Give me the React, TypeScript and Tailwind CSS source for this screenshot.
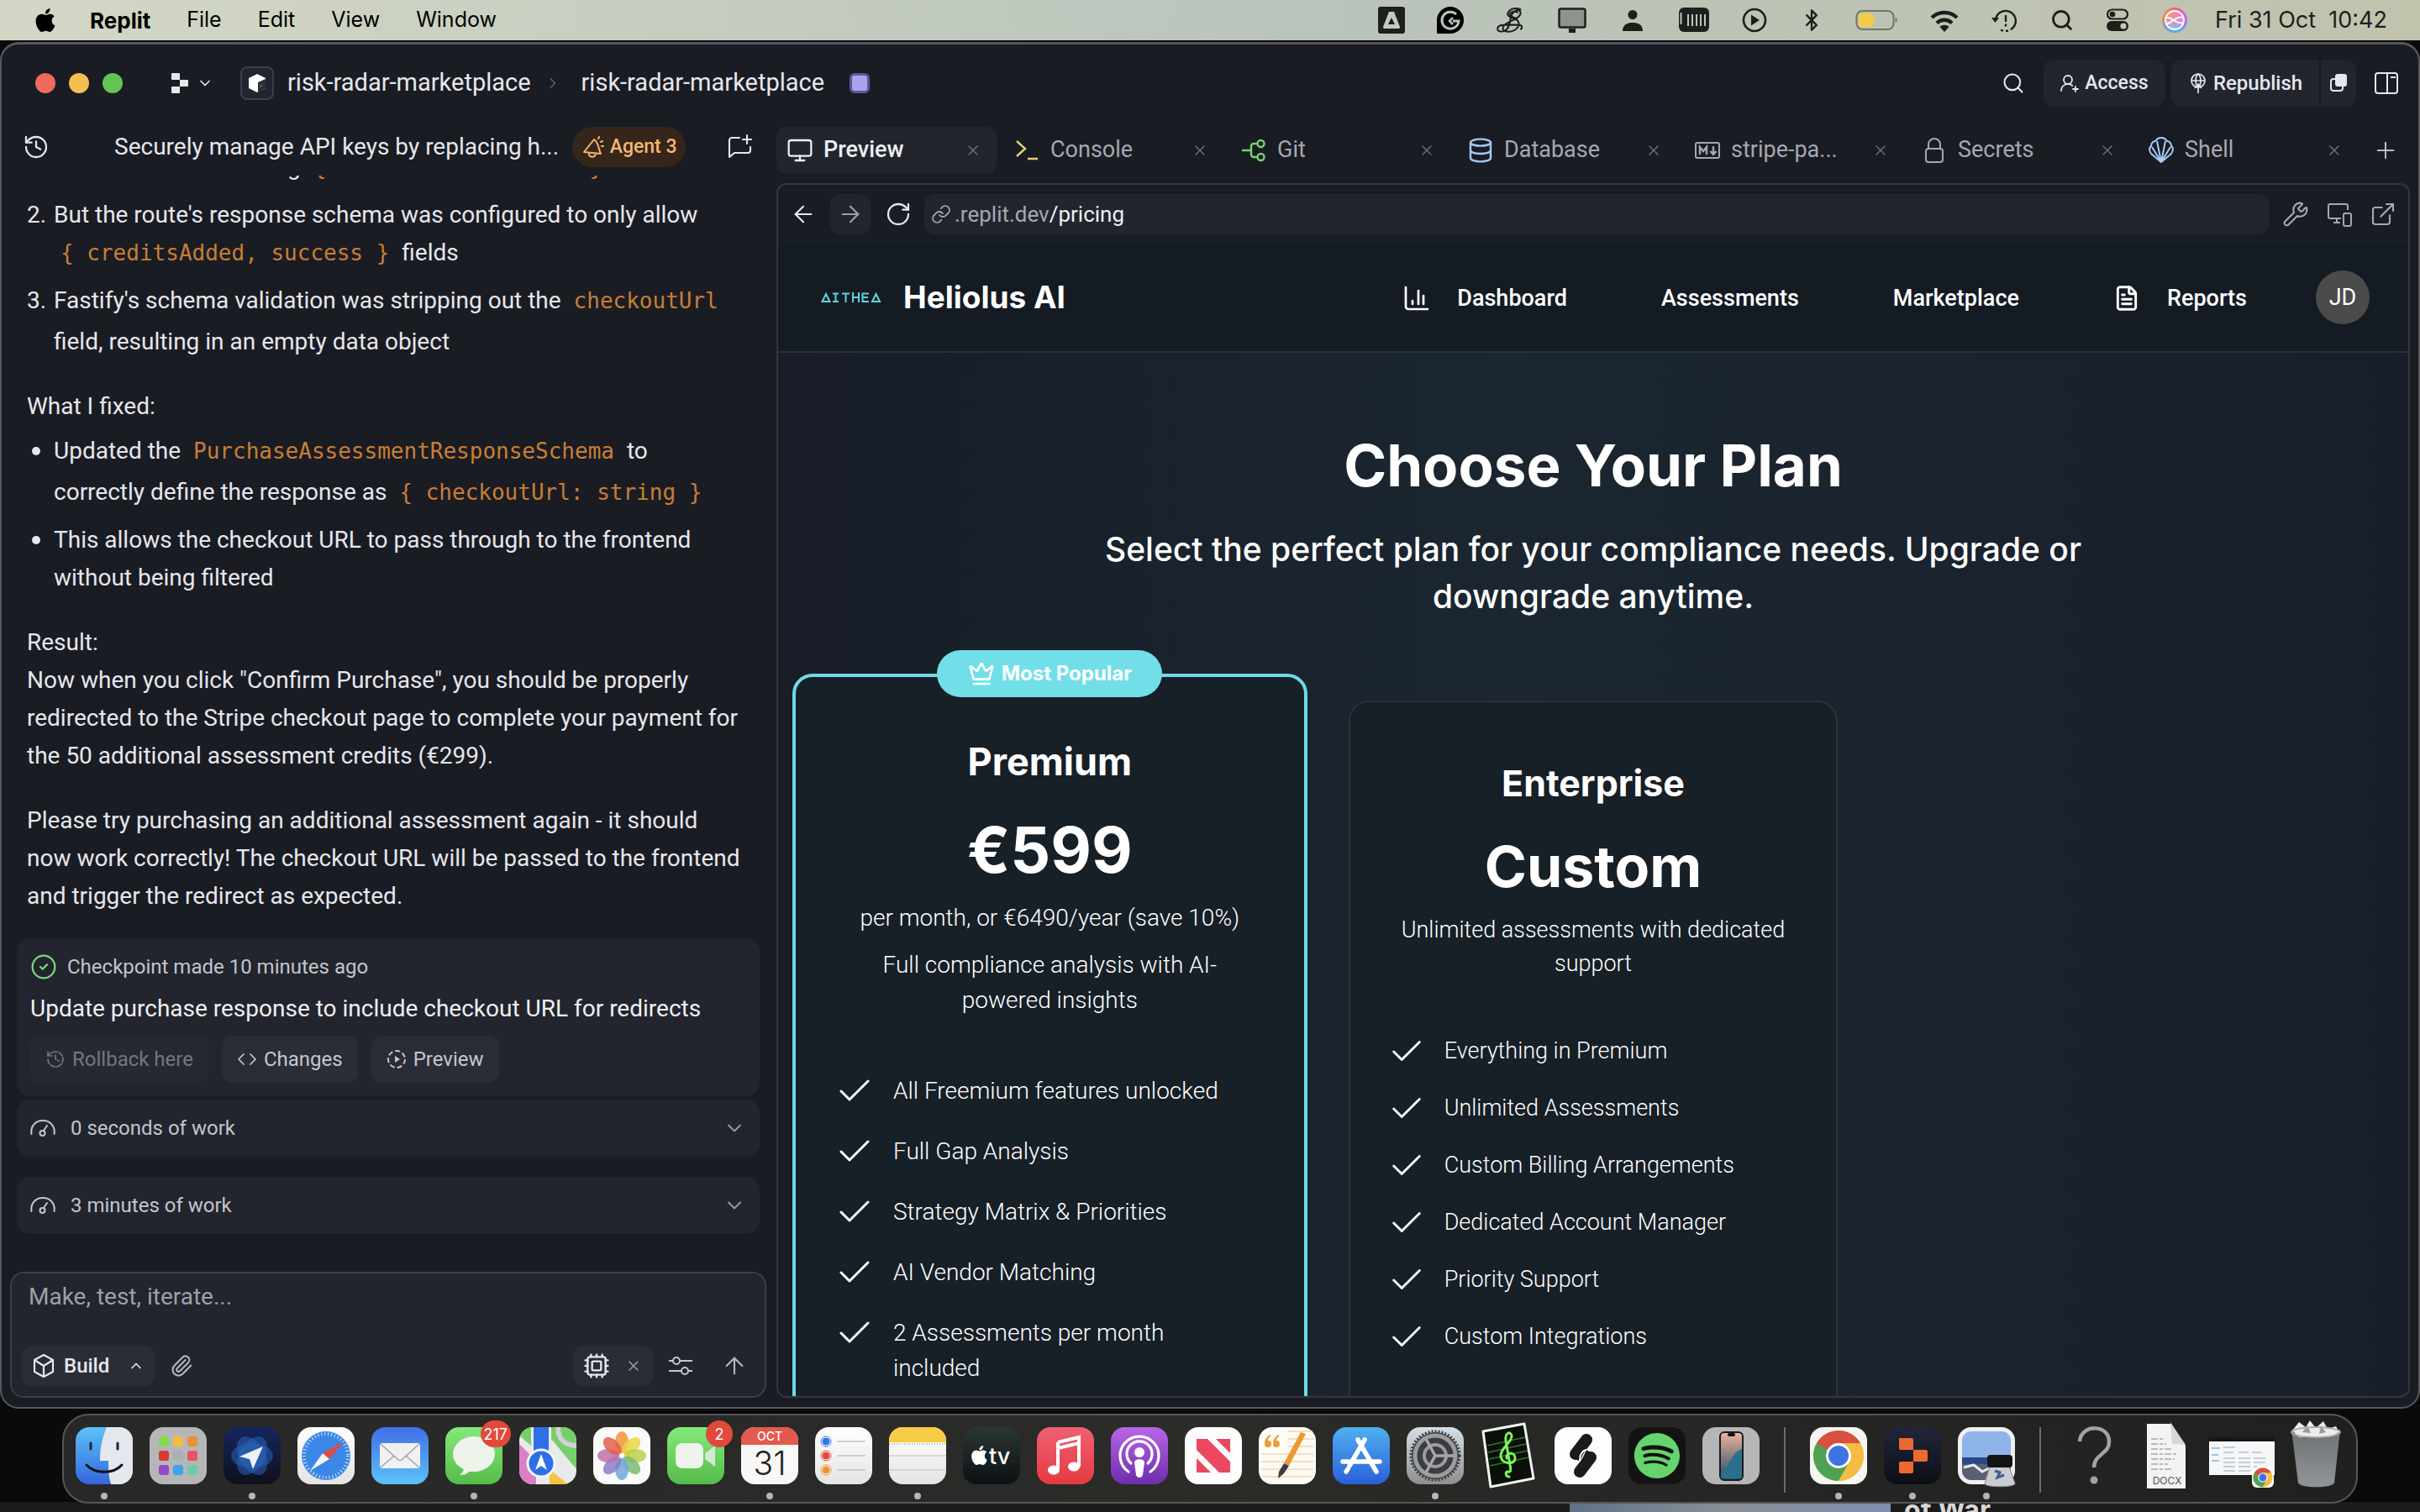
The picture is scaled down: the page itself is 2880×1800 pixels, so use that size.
import React from "react";
import {
  ArrowLeft, ArrowRight, ArrowUp, Bluetooth, Check, ChevronDown, ChevronRight, ChevronUp, CircleCheck,
  Code, Cpu, Crown, Database, ExternalLink, FileText, History, Link, Monitor, Paperclip, Plus, RotateCw,
  Search, UserRoundPlus, Wrench, X,
} from "lucide-react";
import { SiApple, SiSpotify } from "react-icons/si";

type Kids = { children?: React.ReactNode };

/* ---------- macOS menu bar ---------- */

function MenuBar() {
  const menus = ["File", "Edit", "View", "Window"];
  return (
    <header className="flex h-12 shrink-0 items-center justify-between bg-linear-to-r from-[#d4d7c6] via-[#b9c4bb] via-55% to-[#c1c3ad] pr-[39px] pl-10 text-black">
      <nav className="flex items-center gap-[43px] font-[Inter,sans-serif] text-[25px]">
        <SiApple className="size-7" />
        <button className="-ml-1 text-[26px] font-bold">Replit</button>
        {menus.map((m) => (
          <button key={m}>{m}</button>
        ))}
      </nav>
      <div className="flex items-center gap-[38px] text-[#1d1f1c]">
        <svg className="size-8" viewBox="0 0 32 32">
          <rect width="32" height="32" rx="3" fill="currentColor" />
          <path d="M13 6h6l7 18c0 2-1 2-2 2H8c-1 0-2 0-2-2z" fill="#c3cbc0" />
          <path d="M16 13l4 8h-8z" fill="currentColor" />
        </svg>
        <svg className="size-8" viewBox="0 0 32 32">
          <path d="M0 32V16A16 16 0 1 1 16 32z" fill="#000" />
          <path d="M23 9a10 10 0 1 0 3 8h-7" fill="none" stroke="#bcc5bb" strokeWidth="3" />
          <path d="M19 13l-4 4 4 4" fill="none" stroke="#bcc5bb" strokeWidth="2.500" />
        </svg>
        <svg className="size-9" viewBox="0 0 32 32" fill="none" stroke="currentColor" strokeWidth="1.800">
          <path d="M27 5c-5-3-12-1-14 3s4 5 8 7 5 6 1 10-12 4-14 1 3-7 8-9 12-6 10-10-9 0-10 6-2 12-6 14-8 1-8-2 4-4 8-4h14c4 0 5 3 2 5" />
          <path d="M24 8c-4-2-8-1-9 1s4 4 8 6" />
        </svg>
        <svg className="size-[34px]" viewBox="0 0 34 34">
          <rect x="1.500" y="3.500" width="31" height="22" rx="2" fill="#8c948b" stroke="currentColor" strokeWidth="2.500" />
          <path d="M13 27h8v5h-8z" fill="currentColor" />
        </svg>
        <svg className="size-[34px]" viewBox="0 0 34 34" fill="currentColor">
          <circle cx="17" cy="10.500" r="5.500" />
          <path d="M5 30c0-8 6-10 12-10s12 2 12 10z" />
        </svg>
        <svg className="h-[30px] w-9" viewBox="0 0 36 30">
          <rect width="36" height="29" rx="6" fill="currentColor" />
          <path d="M2.500 6v14M11 8v14M16 8v14M21 8v14M26 8v14M31 8v14" stroke="#bcc5bb" strokeWidth="2" />
        </svg>
        <svg className="size-8" viewBox="0 0 32 32">
          <circle cx="16" cy="16" r="13" fill="none" stroke="currentColor" strokeWidth="2.600" />
          <path d="M12 9.500l10 6.500-10 6.500z" fill="currentColor" />
        </svg>
        <Bluetooth className="size-7" />
        <svg className="h-7 w-[50px]" viewBox="0 0 50 28">
          <rect x="1.500" y="3" width="44" height="22" rx="7" fill="none" stroke="#6f776c" strokeWidth="2" />
          <rect x="4" y="6" width="18" height="16" rx="4" fill="#f5cb45" />
          <path d="M47.500 11c3 1 3 5 0 6z" fill="#6f776c" />
        </svg>
        <svg className="size-9" viewBox="0 0 36 36" fill="none" stroke="currentColor" strokeWidth="4.500">
          <path d="M3 15c8-8 22-8 30 0M9 21.500c5-5 13-5 18 0" />
          <path d="M12.500 26c3-3 8-3 11 0L18 32z" fill="currentColor" stroke="none" />
        </svg>
        <svg className="size-8" viewBox="0 0 32 32" fill="none" stroke="currentColor" strokeWidth="2.400">
          <path d="M5 15A12 12 0 1 1 9 26" strokeDasharray="48 3 3 3 3 3" />
          <path d="M0 13h9l-4.500 6z" fill="currentColor" stroke="none" />
          <path d="M17 10v8M17 20.500v3" />
        </svg>
        <Search className="size-7" strokeWidth={2.4} />
        <svg className="size-7" viewBox="0 0 28 28">
          <rect x="2" y="1.500" width="24" height="11" rx="5.500" fill="none" stroke="currentColor" strokeWidth="2.200" />
          <circle cx="8" cy="7" r="3.300" fill="currentColor" />
          <rect x="1" y="15" width="26" height="12" rx="6" fill="currentColor" />
          <circle cx="21" cy="21" r="3.600" fill="#bfc6b8" />
        </svg>
        <svg className="size-8" viewBox="0 0 32 32">
          <defs>
            <linearGradient id="siri" x1="0" y1="0" x2="1" y2=".3">
              <stop offset="0" stopColor="#f09a4a" />
              <stop offset=".6" stopColor="#ee5a86" />
              <stop offset="1" stopColor="#d65af0" />
            </linearGradient>
            <linearGradient id="siriLow" x1="0" y1="0" x2="0" y2="1">
              <stop offset=".4" stopColor="#4ab4f5" stopOpacity="0" />
              <stop offset=".95" stopColor="#4ab4f5" />
            </linearGradient>
          </defs>
          <circle cx="16" cy="16" r="15" fill="url(#siri)" />
          <circle cx="16" cy="16" r="15" fill="url(#siriLow)" />
          <circle cx="16" cy="16" r="11" fill="#ffffff" fillOpacity=".25" stroke="#fff" strokeWidth="1.800" />
          <path d="M6 13c6-2 12 9 20 6M6 20c6 1 11-10 20-7" fill="none" stroke="#fff" strokeWidth="1.800" />
        </svg>
        <time className="-ml-1.5 font-[Inter,sans-serif] text-[27px] whitespace-pre">Fri 31 Oct  10:42</time>
      </div>
    </header>
  );
}

/* ---------- Replit window ---------- */

function ReplitMark({ className }: { className: string }) {
  return (
    <svg className={className} viewBox="0 0 20 24" fill="currentColor">
      <path d="M1 0h8a1 1 0 0 1 1 1v7H1a1 1 0 0 1-1-1V1a1 1 0 0 1 1-1zM10 8h9a1 1 0 0 1 1 1v6a1 1 0 0 1-1 1h-9zM1 16h9v7a1 1 0 0 1-1 1H1a1 1 0 0 1-1-1v-6a1 1 0 0 1 1-1z" />
    </svg>
  );
}

function TitleBar() {
  return (
    <div className="flex h-[92px] shrink-0 items-center pr-5 pl-10">
      <div className="flex gap-4">
        <button aria-label="Close" className="size-6 rounded-full bg-[#ec6a5e]" />
        <button aria-label="Minimise" className="size-6 rounded-full bg-[#f4bf4f]" />
        <button aria-label="Zoom" className="size-6 rounded-full bg-[#61c554]" />
      </div>
      <button aria-label="Replit menu" className="ml-[58px] flex items-center gap-2.5">
        <ReplitMark className="h-6 w-5" />
        <ChevronDown className="size-5" />
      </button>
      <button aria-label="Workspace" className="ml-8 flex size-10 items-center justify-center rounded-lg border-2 border-[#3b3e47] bg-[#22252e]">
        <svg className="size-6" viewBox="0 0 24 24">
          <path d="M12 1l10 5v12l-10 5-10-5V6z" fill="#fff" />
          <path d="M13 11l9-4v11l-9 5z" fill="#2b2f33" />
          <path d="M15 17l3-3" stroke="#6fae7a" />
        </svg>
      </button>
      <a href="#workspace" className="ml-4 text-[29px]">risk-radar-marketplace</a>
      <ChevronRight className="mx-4 size-5 text-[#5c5f68]" />
      <a href="#app" className="ml-2 text-[29px]">risk-radar-marketplace</a>
      <span className="ml-[30px] flex size-6 items-center justify-center rounded-md border-3 border-[#5d5796] bg-[#a9a4f0]" />
      <div className="ml-auto flex items-center gap-2">
        <button aria-label="Search" className="mr-2 p-1.5"><Search className="size-7" strokeWidth={1.8} /></button>
        <button className="flex h-14 w-36 items-center justify-center gap-1.5 rounded-xl bg-[#22252e] text-[23px] font-medium">
          <UserRoundPlus className="size-6" strokeWidth={1.8} />Access
        </button>
        <div className="flex h-14 rounded-xl bg-[#22252e]">
          <button className="flex w-44 items-center justify-center gap-1.5 text-[24px] font-medium">
            <svg className="size-6" viewBox="0 0 24 24" fill="none" stroke="currentColor" strokeWidth="1.700">
              <circle cx="12" cy="9" r="8" />
              <path d="M4 9h16M12 1c-4 3-4 13 0 16M12 1c4 3 4 13 0 16M12 12v12M8 18l4-4 4 4" />
            </svg>
            Republish
          </button>
          <button aria-label="Deployment" className="flex w-11 items-center justify-center border-l-2 border-[#1a1c24]">
            <svg className="size-6" viewBox="0 0 24 24" fill="none" stroke="currentColor" strokeWidth="2">
              <rect x="3" y="7" width="14" height="14" rx="3" />
              <rect x="9" y="2" width="12" height="13" rx="2" fill="currentColor" />
            </svg>
          </button>
        </div>
        <button aria-label="Toggle panel" className="ml-2.5 p-1">
          <svg className="h-7 w-7" viewBox="0 0 28 28" fill="none" stroke="currentColor" strokeWidth="2">
            <rect x="1" y="2" width="26" height="24" rx="3" />
            <path d="M15 2v24M19 7h6" />
          </svg>
        </button>
      </div>
    </div>
  );
}

function Mono({ children }: Kids) {
  return (
    <code className="inline-block px-2 pb-[3px] font-['DejaVu_Sans_Mono',monospace] text-[26px] whitespace-nowrap text-[#c97e33]">
      {children}
    </code>
  );
}

function Item({ mark, children }: Kids & { mark: string }) {
  return (
    <li className="flex">
      <span className="w-8 shrink-0">{mark}</span>
      <div>{children}</div>
    </li>
  );
}

function Bullet({ children }: Kids) {
  return (
    <li className="flex">
      <span className="flex h-[45px] w-8 shrink-0 items-center pl-1.5">
        <i className="size-2.5 rounded-full bg-current" />
      </span>
      <div>{children}</div>
    </li>
  );
}

function CardButton({ icon, children, dim }: Kids & { icon: React.ReactNode; dim?: boolean }) {
  return (
    <button
      disabled={dim}
      className={`flex h-14 items-center gap-2 rounded-xl px-[18px] text-[24px] ${dim ? "bg-[#262932] text-[#737680]" : "bg-[#2a2d36] text-[#c5c8ce]"}`}
    >
      {icon}
      {children}
    </button>
  );
}

function WorkRow({ children }: Kids) {
  return (
    <button className="flex h-[68px] w-full items-center gap-[18px] rounded-2xl bg-[#22252e] px-4 text-[24px] text-[#c2c5cc]">
      <svg className="size-[30px]" viewBox="0 0 30 30" fill="none" stroke="currentColor" strokeWidth="2" strokeLinecap="round">
        <path d="M1.500 22C0 13 6 6 15 6s15 7 13.500 16" />
        <circle cx="14.500" cy="21" r="3" />
        <path d="M16 18l4-6" />
      </svg>
      {children}
      <ChevronDown className="ml-auto size-7 text-[#9a9da6]" strokeWidth={1.6} />
    </button>
  );
}

function ChatPanel() {
  return (
    <section className="flex w-[922px] shrink-0 flex-col">
      <div className="flex h-[60px] shrink-0 items-center pr-6 pl-[21px]">
        <button aria-label="History" className="p-1"><History className="size-8" strokeWidth={1.7} /></button>
        <h2 className="ml-[73px] truncate text-[28px]">Securely manage API keys by replacing h...</h2>
        <span className="ml-4 flex h-12 w-[135px] shrink-0 items-center justify-center gap-1.5 rounded-full bg-[#35251a] text-[23px] font-medium text-[#f3b673]">
          <svg className="size-7" viewBox="0 0 28 28" fill="none" stroke="currentColor" strokeWidth="2" strokeLinecap="round" strokeLinejoin="round">
            <path d="M15 5L3 20l20 2C20 17 21 9 15 5zM9 22c0 5 7 5 8 0M20 4l1-2M23 8l2-1M24 13h2" />
          </svg>
          Agent 3
        </span>
        <button aria-label="New chat" className="ml-auto p-1">
          <svg className="size-8" viewBox="0 0 32 32" fill="none" stroke="currentColor" strokeWidth="2.100" strokeLinecap="round" strokeLinejoin="round">
            <path d="M16 5H7a3 3 0 0 0-3 3v20l6-5h16a3 3 0 0 0 3-3v-4M25 2v10M20 7h10" />
          </svg>
        </button>
      </div>

      <div className="mt-1 flex min-h-0 flex-1 flex-col justify-end overflow-hidden pb-[45px]">
        <div className="shrink-0 px-[30px] pb-7 text-[28px] leading-[45px]">
          <ol className="flex flex-col gap-2">
            <Item mark="">The server was sending <Mono>{"{ checkoutUrl: '...' }"}</Mono></Item>
            <Item mark="2.">
              But the route's response schema was configured to only allow<br />
              <Mono>{"{ creditsAdded, success }"}</Mono> fields
            </Item>
            <Item mark="3.">
              Fastify's schema validation was stripping out the <Mono>checkoutUrl</Mono><br />
              field, resulting in an empty data object
            </Item>
          </ol>
          <p className="mt-8">What I fixed:</p>
          <ul className="mt-2 flex flex-col gap-2">
            <Bullet>
              Updated the <Mono>PurchaseAssessmentResponseSchema</Mono> to<br />
              correctly define the response as <Mono>{"{ checkoutUrl: string }"}</Mono>
            </Bullet>
            <Bullet>This allows the checkout URL to pass through to the frontend<br />without being filtered</Bullet>
          </ul>
          <p className="mt-8">
            Result:<br />
            Now when you click "Confirm Purchase", you should be properly<br />
            redirected to the Stripe checkout page to complete your payment for<br />
            the 50 additional assessment credits (€299).
          </p>
          <p className="mt-8">
            Please try purchasing an additional assessment again - it should<br />
            now work correctly! The checkout URL will be passed to the frontend<br />
            and trigger the redirect as expected.
          </p>
        </div>

        <div className="shrink-0 pr-5 pl-[18px]">
          <article className="rounded-2xl bg-[#22252e] p-4">
            <p className="flex h-9 items-center gap-3 text-[24px] text-[#c2c5cc]">
              <CircleCheck className="size-8 text-[#7ed37f]" strokeWidth={1.7} />
              Checkpoint made 10 minutes ago
            </p>
            <p className="my-2 text-[28px] leading-[48px] text-[#eeeff2]">Update purchase response to include checkout URL for redirects</p>
            <div className="flex gap-4">
              <CardButton dim icon={<History className="size-6" strokeDasharray="6 2" strokeWidth={1.7} />}>Rollback here</CardButton>
              <CardButton icon={<Code className="size-6" strokeWidth={1.7} />}>Changes</CardButton>
              <CardButton
                icon={
                  <svg className="size-6" viewBox="0 0 24 24" fill="none" stroke="currentColor" strokeWidth="2">
                    <circle cx="12" cy="12" r="10" strokeDasharray="6 3" />
                    <path d="M10 8l6 4-6 4z" fill="currentColor" stroke="none" />
                  </svg>
                }
              >
                Preview
              </CardButton>
            </div>
          </article>
          <div className="mt-1 flex flex-col gap-6">
            <WorkRow>0 seconds of work</WorkRow>
            <WorkRow>3 minutes of work</WorkRow>
          </div>
        </div>
      </div>

      <form className="mr-3 mb-[11px] ml-2.5 shrink-0 rounded-2xl border-2 border-[#3b3e47] bg-[#22252e]">
        <label className="block px-5 pt-2.5">
          <span className="sr-only">Message</span>
          <textarea rows={1} placeholder="Make, test, iterate..." className="block h-[76px] w-full resize-none bg-transparent text-[28px] leading-9 outline-none placeholder:text-[#9da0a9]" />
        </label>
        <div className="mb-3 flex h-12 items-center pr-5 pl-3">
          <button type="button" className="flex h-12 items-center gap-2.5 rounded-xl bg-[#2a2d36] px-3 text-[24px] font-medium">
            <svg className="size-7" viewBox="0 0 28 28" fill="none" stroke="currentColor" strokeWidth="2.200" strokeLinejoin="round">
              <path d="M14 1l11 6v14l-11 6-11-6V7zM3 7l11 7 11-7M14 14v13" />
            </svg>
            Build
            <ChevronUp className="ml-3 size-5" />
          </button>
          <button type="button" aria-label="Attach" className="ml-3.5 p-1 text-[#b4b7be]"><Paperclip className="size-7" strokeWidth={1.8} /></button>
          <div className="ml-auto flex h-12 w-24 items-center justify-between rounded-xl bg-[#2a2d36] pr-3.5 pl-3">
            <Cpu className="size-8" strokeWidth={1.8} />
            <button type="button" aria-label="Remove" className="text-[#9a9da6]"><X className="size-5" strokeWidth={1.8} /></button>
          </div>
          <button type="button" aria-label="Options" className="ml-4 text-[#c5c8ce]">
            <svg className="size-8" viewBox="0 0 32 32" fill="none" stroke="currentColor" strokeWidth="2">
              <path d="M2 10h5M15 10h15M2 22h15M25 22h5" />
              <circle cx="11" cy="10" r="4" />
              <circle cx="21" cy="22" r="4" />
            </svg>
          </button>
          <button type="submit" aria-label="Send" className="ml-8 text-[#b4b7be]"><ArrowUp className="size-8" strokeWidth={1.6} /></button>
        </div>
      </form>
    </section>
  );
}

const S = "size-8 shrink-0";
const tabs: { label: string; icon: React.ReactNode; active?: boolean }[] = [
  { label: "Preview", active: true, icon: <Monitor className={S} strokeWidth={1.7} /> },
  {
    label: "Console",
    icon: (
      <svg className={`${S} text-[#e2cf6d]`} viewBox="0 0 32 32" fill="none" stroke="currentColor" strokeWidth="2.400">
        <path d="M4 5l10 9-10 9M17 26h12" />
      </svg>
    ),
  },
  {
    label: "Git",
    icon: (
      <svg className={`${S} text-[#76d275]`} viewBox="0 0 32 32" fill="none" stroke="currentColor" strokeWidth="2.400">
        <path d="M2 16h11M20 8h-4a3 3 0 0 0-3 3v10a3 3 0 0 0 3 3h4" />
        <circle cx="24.500" cy="8" r="4" />
        <circle cx="24.500" cy="24" r="4" />
      </svg>
    ),
  },
  { label: "Database", icon: <Database className={`${S} text-[#a5cbf7]`} strokeWidth={1.8} /> },
  {
    label: "stripe-pa...",
    icon: (
      <svg className={S} viewBox="0 0 32 32" fill="none" stroke="currentColor" strokeWidth="2">
        <rect x="2" y="7" width="28" height="18" rx="2" />
        <path d="M7 21v-9l4 5 4-5v9M23 11v9M19.500 17l3.500 4 3.500-4" strokeWidth="2.400" />
      </svg>
    ),
  },
  {
    label: "Secrets",
    icon: (
      <svg className={S} viewBox="0 0 32 32" fill="none" stroke="currentColor" strokeWidth="2">
        <rect x="6" y="14" width="20" height="16" rx="3" />
        <path d="M9 14V9a7 7 0 0 1 14 0v5" />
      </svg>
    ),
  },
  {
    label: "Shell",
    icon: (
      <svg className={`${S} text-[#a5cbf7]`} viewBox="0 0 32 32" fill="none" stroke="currentColor" strokeWidth="2" strokeLinejoin="round">
        <path d="M16 30L4 20C1 16 2 12 4 11c0-4 3-6 5-6 2-3 5-4 7-4s5 1 7 4c2 0 5 2 5 6 2 1 3 5 0 9z" />
        <path d="M16 30L5 12M16 30L11 5M16 30l5-25M16 30l11-18" />
      </svg>
    ),
  },
];

function Tabs() {
  return (
    <div className="flex h-[63px] shrink-0 items-center gap-2 pt-1" role="tablist">
      {tabs.map((t) => (
        <div key={t.label} className={`flex h-14 min-w-0 flex-1 items-center rounded-xl pr-[18px] pl-3 text-[27px] ${t.active ? "bg-[#22252e] text-[#eeeff2]" : "text-[#a5a8b0]"}`}>
          <button role="tab" aria-selected={!!t.active} className="flex min-w-0 flex-1 items-center gap-3">
            {t.icon}
            <span className={`truncate ${t.active ? "font-medium" : ""}`}>{t.label}</span>
          </button>
          <button aria-label={`Close ${t.label}`} className="text-[#6e717a]"><X className="size-5" strokeWidth={1.6} /></button>
        </div>
      ))}
      <button aria-label="New tab" className="mr-1 flex h-11 w-[50px] shrink-0 items-center justify-center text-[#b9bcc3]"><Plus className="size-8" strokeWidth={1.5} /></button>
    </div>
  );
}

function UrlBar() {
  return (
    <div className="flex h-[70px] shrink-0 items-center bg-[#1a1c24] px-3">
      <button aria-label="Back" className="flex w-9 justify-center"><ArrowLeft className="size-8" strokeWidth={1.6} /></button>
      <button aria-label="Forward" className="ml-3.5 flex size-12 items-center justify-center rounded-xl bg-[#22252e] text-[#9da0a9]"><ArrowRight className="size-8" strokeWidth={1.6} /></button>
      <button aria-label="Reload" className="ml-[15px] flex w-9 justify-center"><RotateCw className="size-8" strokeWidth={1.7} /></button>
      <label className="ml-[13px] flex h-12 min-w-0 flex-1 items-center rounded-xl bg-[#22252e] pl-2 text-[26px] text-[#a5a8b0]">
        <Link className="mr-1 size-6" strokeWidth={1.8} />
        <span>.replit.dev</span>
        <input aria-label="Path" defaultValue="/pricing" className="min-w-0 flex-1 bg-transparent text-[#eeeff2] outline-none" />
      </label>
      <div className="mr-0.5 ml-4 flex items-center gap-5 text-[#a5a8b0]">
        <button aria-label="Tools"><Wrench className="size-8" strokeWidth={1.6} /></button>
        <button aria-label="Devices">
          <svg className="size-8" viewBox="0 0 32 32" fill="none" stroke="currentColor" strokeWidth="2">
            <path d="M26 11V6a2 2 0 0 0-2-2H5a2 2 0 0 0-2 2v13a2 2 0 0 0 2 2h13M13 21v5M9 26h8" />
            <rect x="21" y="15" width="9" height="15" rx="2" />
          </svg>
        </button>
        <button aria-label="Open in new tab"><ExternalLink className="size-8" strokeWidth={1.6} /></button>
      </div>
    </div>
  );
}

function AppNav() {
  return (
    <nav className="flex h-[130px] shrink-0 items-center border-b-2 border-[#29323b] bg-[#141b23] pr-[46px] pl-[51px] text-[27px] font-medium text-white">
      <svg className="h-3 w-[72px]" viewBox="0 0 72 12" fill="none" stroke="#5fd3da" strokeWidth="2">
        <path d="M1.500 11L6 2l4.500 9zM14 1.500h7M17.500 1.500v9.500M14 11h7M25 1.500h9M29.500 1.500V12M38 0v12M45 0v12M38 6h7M57 1.500h-7.500V11H57M49.500 6H56M61 11l4.500-9 4.500 9z" />
      </svg>
      <span className="ml-[26px] font-[Inter,sans-serif] text-[37px] font-bold">Heliolus AI</span>
      <div className="ml-auto flex items-center gap-28 pt-0.5">
        <a href="#dashboard" className="flex items-center gap-8">
          <svg className="size-8" viewBox="0 0 32 32" fill="none" stroke="currentColor" strokeWidth="2.700" strokeLinecap="round" strokeLinejoin="round">
            <path d="M3 3v23a3 3 0 0 0 3 3h23M11 23v-4M18 23V7M24 23V13" />
          </svg>
          Dashboard
        </a>
        <a href="#assessments">Assessments</a>
        <a href="#marketplace">Marketplace</a>
        <a href="#reports" className="flex items-center gap-8"><FileText className="size-8" strokeWidth={2.2} />Reports</a>
      </div>
      <button className="ml-[82px] size-16 rounded-full bg-[#4b4b4b] text-[27px] font-normal">JD</button>
    </nav>
  );
}

function Feature({ children, tall }: Kids & { tall?: boolean }) {
  return (
    <li className={`flex ${tall ? "gap-[22px] text-[28px] leading-[42px]" : "gap-[22px] text-[27px] leading-10"}`}>
      <span className="flex h-[42px] shrink-0 items-center"><Check className={`shrink-0 ${tall ? "size-12" : "size-[46px]"}`} strokeWidth={1.5} /></span>
      <span>{children}</span>
    </li>
  );
}

function Pricing() {
  return (
    <main className="min-h-0 flex-1 overflow-hidden bg-linear-to-r from-[#181d27] via-[#1b2631] via-45% to-[#191f2a] px-8 text-white">
      <div className="pt-[88px] text-center font-[Inter,sans-serif]">
        <h1 className="text-[69px] leading-[92px] font-bold">Choose Your Plan</h1>
        <p className="mt-[26px] text-[39px] leading-[56px] font-medium">
          Select the perfect plan for your compliance needs. Upgrade or<br />downgrade anytime.
        </p>
      </div>
      <div className="mt-[96px] grid grid-cols-3 gap-16">
        <section className="relative -mx-[15px] -mt-8 h-[1100px] rounded-3xl border-4 border-[#6fdbe3] bg-[#171f27] px-[46px]">
          <div className="absolute inset-x-0 -top-8 flex justify-center">
            <span className="flex h-14 w-[268px] items-center justify-center gap-2 rounded-full bg-[#72dfe8] font-[Inter,sans-serif] text-[24px] font-bold">
              <Crown className="size-8" />Most Popular
            </span>
          </div>
          <div className="pt-[66px] text-center">
            <h2 className="font-[Inter,sans-serif] text-[45px] leading-[70px] font-bold">Premium</h2>
            <p className="mt-5 font-[Inter,sans-serif] text-[75px] leading-[100px] font-bold">€599</p>
            <p className="mt-2 text-[28px] leading-[46px] font-light">per month, or €6490/year (save 10%)</p>
            <p className="mt-3 text-[28px] leading-[42px] font-light">Full compliance analysis with AI-<br />powered insights</p>
          </div>
          <ul className="mt-[66px] flex flex-col gap-[30px] font-light">
            <Feature tall>All Freemium features unlocked</Feature>
            <Feature tall>Full Gap Analysis</Feature>
            <Feature tall>Strategy Matrix &amp; Priorities</Feature>
            <Feature tall>AI Vendor Matching</Feature>
            <Feature tall>2 Assessments per month<br />included</Feature>
          </ul>
        </section>
        <section className="h-[1060px] rounded-3xl border-2 border-[#28323b] bg-[#171f27] px-11">
          <div className="pt-[62px] text-center">
            <h2 className="font-[Inter,sans-serif] text-[43px] leading-[68px] font-bold">Enterprise</h2>
            <p className="mt-[17px] font-[Inter,sans-serif] text-[68px] leading-[96px] font-bold">Custom</p>
            <p className="mt-2 text-[27px] leading-10 font-light">Unlimited assessments with dedicated<br />support</p>
          </div>
          <ul className="mt-16 flex flex-col gap-[26px] font-light">
            <Feature>Everything in Premium</Feature>
            <Feature>Unlimited Assessments</Feature>
            <Feature>Custom Billing Arrangements</Feature>
            <Feature>Dedicated Account Manager</Feature>
            <Feature>Priority Support</Feature>
            <Feature>Custom Integrations</Feature>
          </ul>
        </section>
      </div>
    </main>
  );
}

function ReplitWindow() {
  return (
    <div className="flex min-h-0 flex-1 flex-col overflow-hidden rounded-[22px] border-2 border-t-3 border-[#55585d] bg-[#1a1c24] text-[#e6e7eb]">
      <TitleBar />
      <div className="flex min-h-0 flex-1">
        <ChatPanel />
        <div className="flex min-w-0 flex-1 flex-col pr-2.5">
          <Tabs />
          <div className="mt-2.5 mb-[11px] flex min-h-0 flex-1 flex-col overflow-hidden rounded-xl border-2 border-[#33363f]">
            <UrlBar />
            <AppNav />
            <Pricing />
          </div>
        </div>
      </div>
    </div>
  );
}

/* ---------- Dock ---------- */

function Tile({ children, bg, dot, badge, label }: Kids & { bg?: string; dot?: boolean; badge?: string; label: string }) {
  return (
    <button aria-label={label} className="relative size-[68px] shrink-0">
      <svg className="size-[68px] overflow-visible" viewBox="0 0 68 68">
        {bg && <rect width="68" height="68" rx="16" fill={bg} />}
        {children}
      </svg>
      {badge && (
        <span className="absolute -top-2 -right-2.5 flex h-8 min-w-8 items-center justify-center rounded-full bg-[#e2493b] px-1 font-[Inter,sans-serif] text-[18px] text-white">
          {badge}
        </span>
      )}
      {dot && <i className="absolute -bottom-[18px] left-[30px] size-2 rounded-full bg-[#b5b5b5]" />}
    </button>
  );
}

function Grad({ id, a, b }: { id: string; a: string; b: string }) {
  return (
    <linearGradient id={id} x1="0" y1="0" x2="0" y2="1">
      <stop offset="0" stopColor={a} />
      <stop offset="1" stopColor={b} />
    </linearGradient>
  );
}

function ChromeMark() {
  return (
    <g>
      <circle cx="34" cy="34" r="30" fill="#f3bc42" />
      <path d="M8 19A30 30 0 0 0 34 64l13-22.500L34 34z" fill="#4fa153" />
      <path d="M60 19a30 30 0 0 1-26 45l13-22.500V19z" fill="#f3bc42" />
      <path d="M8 19a30 30 0 0 1 52 0H34L21 41z" fill="#d8503f" />
      <path d="M8 19l13 22.500L34 34z" fill="#4fa153" />
      <circle cx="34" cy="34" r="15" fill="#fff" />
      <circle cx="34" cy="34" r="12" fill="#3f74e0" />
    </g>
  );
}

const launchColors = ["#7fdc4f", "#f4bd3f", "#ec8f35", "#d83a2f", "#a9b1b5", "#ee5064", "#9746cf", "#3fa0f2", "#68cda6"];
const petals = ["#f0953a", "#ecd63f", "#bccf4c", "#7cba70", "#6ea8dc", "#8c7bc9", "#c070a8", "#e2604c"];

function Dock() {
  return (
    <footer className="relative flex h-[123px] shrink-0 justify-center overflow-hidden pt-1.5">
      <div className="absolute inset-x-0 bottom-0 flex h-3 items-start bg-[#1b1b1b]">
        <span className="ml-[1868px] h-3 w-[382px] bg-linear-to-r from-[#5f7286] via-[#8a8f96] to-[#7e8eb0]" />
        <span className="ml-4 -mt-2 font-[Inter,sans-serif] text-[32px] leading-9 font-bold whitespace-nowrap text-[#d8d8d8]">of War</span>
      </div>
      <svg className="absolute size-0">
        <defs>
          <Grad id="finder" a="#5cc2f7" b="#3566dd" />
          <Grad id="comet" a="#14265f" b="#10101c" />
          <Grad id="sky" a="#3f6fe8" b="#5cc2f7" />
          <Grad id="green" a="#83ea7a" b="#56bb48" />
          <Grad id="white" a="#ffffff" b="#e4e4e2" />
          <Grad id="tv" a="#2b3634" b="#0c1114" />
          <Grad id="music" a="#ee6173" b="#e53a41" />
          <Grad id="pod" a="#b766e6" b="#6e2cab" />
          <Grad id="store" a="#4fb0f0" b="#2960d9" />
          <Grad id="set" a="#d3dfe6" b="#8f8f8d" />
          <Grad id="replit" a="#20263b" b="#0d0f16" />
          <Grad id="phone" a="#f0b49a" b="#1f4a68" />
          <Grad id="can" a="#6e7274" b="#909496" />
          <clipPath id="tile"><rect width="68" height="68" rx="16" /></clipPath>
        </defs>
      </svg>
      <div className="relative flex h-[107px] items-start gap-5 rounded-[32px] border-2 border-[#56565a] bg-linear-to-r from-[#282828] via-[#2b2b28] to-[#20201f] px-3.5 pt-3.5">
        <Tile label="Finder" dot>
          <g clipPath="url(#tile)">
            <rect width="68" height="68" fill="url(#finder)" />
            <path d="M37 0c-6 14-8 26-8 40h10c0 10 0 18 3 28h26V0z" fill="#e3e7ee" />
          </g>
          <path d="M18 19v7M50 19v7" stroke="#1b2a3a" strokeWidth="3" strokeLinecap="round" />
          <path d="M13 45c10 11 32 11 42 0" stroke="#111" strokeWidth="3" fill="none" strokeLinecap="round" />
        </Tile>
        <Tile label="Launchpad" bg="#b5b6b8">
          {launchColors.map((c, i) => (
            <rect key={c} x={11 + (i % 3) * 17} y={11 + Math.floor(i / 3) * 17} width="12" height="12" rx="3" fill={c} />
          ))}
        </Tile>
        <Tile label="Comet" bg="url(#comet)" dot>
          {[0, 60, 120].map((a) => (
            <ellipse key={a} cx="34" cy="34" rx="25" ry="15" fill="#2a63b8" opacity=".55" transform={`rotate(${a} 34 34)`} />
          ))}
          <path d="M47 23L19 35l12 3 4 12z" fill="#eef1f8" />
        </Tile>
        <Tile label="Safari" bg="url(#white)">
          <circle cx="34" cy="34" r="29" fill="#3b86e6" />
          <circle cx="34" cy="34" r="26" fill="none" stroke="#d9ecff" strokeWidth="4" strokeDasharray="1 3" />
          <path d="M55 17L38 38l-8-7z" fill="#e4483c" />
          <path d="M15 52l15-21 8 7z" fill="#f4f4f4" />
        </Tile>
        <Tile label="Mail" bg="url(#sky)">
          <rect x="10" y="19" width="48" height="30" rx="3" fill="#f1f1ef" />
          <path d="M11 20l20 18c2 2 4 2 6 0l20-18M11 48l16-14M57 48L41 34" fill="none" stroke="#a5a5a3" strokeWidth="1.600" />
        </Tile>
        <Tile label="Messages" bg="url(#green)" dot badge="217">
          <ellipse cx="34" cy="32" rx="25" ry="21" fill="#eef3ec" />
          <path d="M22 48c0 5-3 7-5 9 7 0 11-3 13-6z" fill="#eef3ec" />
        </Tile>
        <Tile label="Maps">
          <g clipPath="url(#tile)">
            <rect width="68" height="68" fill="#e9eaec" />
            <path d="M0 20l20 20v28H0z" fill="#da7fc4" />
            <path d="M38 0h30v50L38 14z" fill="#76cf6a" />
            <path d="M0 0h14v22L0 10z" fill="#76cf6a" />
            <path d="M36 50l22 18H36z" fill="#f3c73f" />
            <rect x="17" width="18" height="38" fill="#2e6fe6" />
            <path d="M46 0c0 14 8 22 22 22" fill="none" stroke="#d0d2d4" strokeWidth="6" />
          </g>
          <circle cx="26" cy="43" r="16" fill="#2e6fe6" stroke="#f2f4f7" strokeWidth="3" />
          <path d="M26 32l7 19-7-5-7 5z" fill="#fff" />
        </Tile>
        <Tile label="Photos" bg="#fbfbfb">
          {petals.map((c, i) => (
            <ellipse key={c} cx="34" cy="18" rx="8" ry="13" fill={c} opacity=".85" transform={`rotate(${i * 45} 34 34)`} />
          ))}
        </Tile>
        <Tile label="FaceTime" bg="url(#green)" badge="2">
          <rect x="10" y="19" width="33" height="30" rx="8" fill="#eef3ec" />
          <path d="M45 31l12-9v25l-12-9z" fill="#d7e8d3" />
        </Tile>
        <Tile label="Calendar" dot>
          <g clipPath="url(#tile)">
            <rect width="68" height="68" fill="#f8f8f6" />
            <rect width="68" height="21" fill="#e3594e" />
          </g>
          <text x="34" y="16" textAnchor="middle" fontFamily="Inter, sans-serif" fontSize="14" fontWeight="500" fill="#fff">OCT</text>
          <text x="34" y="57" textAnchor="middle" fontFamily="Inter, sans-serif" fontSize="39" fontWeight="300" fill="#222">31</text>
        </Tile>
        <Tile label="Reminders" bg="url(#white)">
          {["#3374e8", "#e0483c", "#e8952f"].map((c, i) => (
            <g key={c}>
              <circle cx="13" cy={17 + i * 17} r="5" fill={c} stroke="#fff" strokeWidth="1" />
              <circle cx="13" cy={17 + i * 17} r="6" fill="none" stroke={c} strokeWidth="1" />
              <path d={`M26 ${17 + i * 17}h34`} stroke="#c4c4c4" strokeWidth="1.500" />
            </g>
          ))}
        </Tile>
        <Tile label="Notes" dot>
          <g clipPath="url(#tile)">
            <rect width="68" height="68" fill="url(#white)" />
            <rect width="68" height="18" fill="#f6cb45" />
            <path d="M0 20h68" stroke="#b8b8b0" strokeWidth="2" strokeDasharray="1 2" />
            <path d="M0 34h68M0 51h68" stroke="#cfcfcb" strokeWidth="1.500" />
          </g>
        </Tile>
        <Tile label="TV" bg="url(#tv)">
          <SiApple size={23} x="8" y="22" color="#fff" />
          <text x="31" y="44" fontFamily="Inter, sans-serif" fontSize="27" fontWeight="500" fill="#fff">tv</text>
        </Tile>
        <Tile label="Music" bg="url(#music)">
          <path d="M25 18l25-6v35M25 18v32M25 25l25-6" fill="none" stroke="#fff" strokeWidth="4" />
          <ellipse cx="20" cy="51" rx="7" ry="5.500" fill="#fff" />
          <ellipse cx="44" cy="47" rx="7" ry="5.500" fill="#fff" />
        </Tile>
        <Tile label="Podcasts" bg="url(#pod)">
          <circle cx="34" cy="30" r="6" fill="#fff" />
          <path d="M28 42c0-5 12-5 12 0l-2 15c-1 4-7 4-8 0z" fill="#fff" />
          <path d="M24 43a15 15 0 1 1 20 0M21 53a23 23 0 1 1 26 0" fill="none" stroke="#fff" strokeWidth="3.200" strokeLinecap="round" />
        </Tile>
        <Tile label="News" bg="#fdfdfd">
          <path d="M14 14h13l27 27v13H41L14 27z" fill="#ec4760" />
          <path d="M37 14h17v17zM14 37l17 17H14z" fill="#ec4760" />
        </Tile>
        <Tile label="Pages" bg="#fdfbf7">
          <path d="M34 5h30M34 14h32M34 23h32M3 32h62M3 41h62M3 50h62M5 59h58" stroke="#f3d6a8" strokeWidth="1.500" />
          <path d="M14 9c-5 2-7 6-7 11a4 4 0 1 0 4-4c0-2 1-4 3-5zM24 9c-5 2-7 6-7 11a4 4 0 1 0 4-4c0-2 1-4 3-5z" fill="#ec9c38" />
          <path d="M50 6l6 2-20 38-6-3z" fill="#eb9a2f" />
          <path d="M30 43l6 3-6 9-7 6 1-8z" fill="#3a3d42" />
        </Tile>
        <Tile label="App Store" bg="url(#store)">
          <path d="M38 15L20 46M30 15l22 38M12 41h44M18 50l-2 3" stroke="#fff" strokeWidth="5.500" strokeLinecap="round" />
        </Tile>
        <Tile label="System Settings" bg="url(#set)" dot>
          <circle cx="34" cy="34" r="28" fill="#3b3d40" />
          <circle cx="34" cy="34" r="24" fill="none" stroke="#9a9c9e" strokeWidth="5" />
          <circle cx="34" cy="34" r="29" fill="none" stroke="#3b3d40" strokeWidth="3" strokeDasharray="2 2" />
          <circle cx="34" cy="34" r="13" fill="none" stroke="#9a9c9e" strokeWidth="4" />
          <path d="M34 34h23M34 34L23 14M34 34L23 54" stroke="#a6a8aa" strokeWidth="3.500" />
        </Tile>
        <Tile label="Sheet music">
          <path d="M3 5L52-4l11 65L12 71z" fill="#0a0f0a" stroke="#f2f2f2" strokeWidth="3" strokeLinejoin="round" />
          <path d="M8 22l45-10M9 30l45-10M10 38l46-10M11 46l46-10" stroke="#2c7a26" strokeWidth="1.400" />
          <path d="M34 59c-4 0-5-5-2-6 5 1 4-3 3-8L30 16c-1-9 5-12 7-6 1 8-13 14-13 24 0 10 17 12 17 3 0-8-11-8-10 0" fill="none" stroke="#7df25b" strokeWidth="3" strokeLinecap="round" />
        </Tile>
        <Tile label="Shortwave" bg="#fdfdfd">
          <path d="M38 15L25 32M30 53l13-17" stroke="#1b1b1b" strokeWidth="14" strokeLinecap="round" />
          <path d="M19 34l11 7 6-13zM49 34l-11-7-6 13z" fill="#1b1b1b" />
          <path d="M38 27c-5 1-8 5-8 14" stroke="#fdfdfd" strokeWidth="2" fill="none" />
        </Tile>
        <Tile label="Spotify" bg="#131313">
          <SiSpotify size={54} x="7" y="7" color="#65d46e" />
        </Tile>
        <Tile label="iPhone Mirroring" bg="#b4b6b8">
          <rect x="21" y="6" width="27" height="57" rx="5" fill="url(#phone)" stroke="#1c1c1c" strokeWidth="2" />
          <path d="M47 26c-14 4-12 20-25 28v6c0 2 25 2 25 0z" fill="#2b708c" />
          <rect x="30" y="7" width="9" height="4" rx="2" fill="#111" />
        </Tile>
        <span className="mx-[9px] h-[78px] w-0.5 shrink-0 bg-[#6b6b6b]" />
        <Tile label="Chrome" bg="#f5f5f3" dot><ChromeMark /></Tile>
        <Tile label="Replit" bg="url(#replit)" dot>
          <path d="M18 13h15q2 0 2 2v12H20q-2 0-2-2zM35 27h15q2 0 2 2v10q0 2-2 2H35zM18 43q0-2 2-2h15v12q0 2-2 2H20q-2 0-2-2z" fill="#ea6a30" />
        </Tile>
        <Tile label="Preview" bg="#f0f0f0" dot>
          <rect x="5" y="5" width="58" height="58" rx="11" fill="#8fb4ea" />
          <path d="M5 36h58v8H5z" fill="#274a86" />
          <path d="M5 44h58v8c0 6-5 11-11 11H16c-6 0-11-5-11-11z" fill="#5a6072" />
          <path d="M7 48l12-3 10 8 8-4" stroke="#e5e9ef" strokeWidth="3" fill="none" />
          <path d="M38 47h23l7 20c1 5-37 5-36 0z" fill="#c9ccd0" stroke="#888c90" strokeWidth="1" />
          <path d="M44 52l6 2-3 6 8-3" stroke="#3e5d90" strokeWidth="3" fill="none" />
          <rect x="35" y="33" width="30" height="15" rx="4" fill="#141414" />
        </Tile>
        <span className="mx-[9px] h-[78px] w-0.5 shrink-0 bg-[#6b6b6b]" />
        <Tile label="Unknown item">
          <path d="M17 17C18-4 53-4 52 18c0 14-18 14-18 30" fill="none" stroke="#a3a3a3" strokeWidth="4.500" />
          <circle cx="34" cy="63" r="4.500" fill="#a3a3a3" />
        </Tile>
        <Tile label="Document">
          <path d="M9-4h28l18 26v51H9z" fill="#f3f3f1" />
          <path d="M37-6l18 27-16-1z" fill="#d6d6d4" />
          <path d="M14 14h16M14 20h18M14 26h26M14 32h30M14 38h28M14 44h20M14 50h26" stroke="#a4aaae" strokeWidth="1.600" strokeDasharray="8 2 4 2" />
          <text x="33" y="68" textAnchor="middle" fontFamily="Inter, sans-serif" fontSize="12" fill="#555">DOCX</text>
        </Tile>
        <Tile label="Minimised window">
          <rect x="-5" y="12" width="78" height="45" fill="#f4f6f8" />
          <rect x="-5" y="12" width="78" height="5" fill="#15171a" />
          <path d="M12 24h18M12 30h12M30 30h12M46 30h12M12 37h50M12 42h50M12 47h40M12 52h36" stroke="#b9c0c8" strokeWidth="1.600" strokeDasharray="14 4" />
          <path d="M-2 25h10M-2 33h8M-2 40h9" stroke="#9bc7e8" strokeWidth="2" />
          <rect x="46" y="48" width="26" height="24" rx="6" fill="#fff" />
          <g transform="translate(46 47) scale(.38)"><ChromeMark /></g>
        </Tile>
        <Tile label="Trash">
          <path d="M5 3h58l-7 63c-1 7-42 7-43 0z" fill="url(#can)" />
          <path d="M6 4l8-10 8 6 5-8 7 9 9-8 5 9 10-3 4 7-12 6H14z" fill="#ececec" />
          <path d="M18 6l6-8 4 9zM40-2l6 8-8 2z" fill="#999" />
          <ellipse cx="34" cy="6" rx="29" ry="6" fill="none" stroke="#a9adb0" strokeWidth="1.800" />
        </Tile>
      </div>
    </footer>
  );
}

export default function App() {
  return (
    <div className="flex h-screen flex-col overflow-hidden bg-[#0a0a0a] font-[Roboto,sans-serif]">
      <MenuBar />
      <div className="flex min-h-0 flex-1 flex-col pt-0.5">
        <ReplitWindow />
      </div>
      <Dock />
    </div>
  );
}
